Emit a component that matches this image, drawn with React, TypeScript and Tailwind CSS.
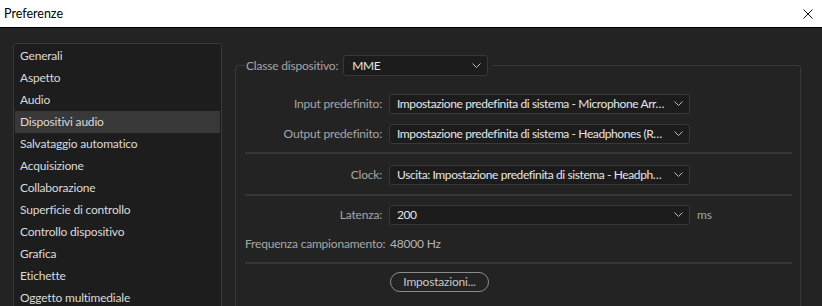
import React from 'react';

const SECTIONS = [
  'Generali',
  'Aspetto',
  'Audio',
  'Dispositivi audio',
  'Salvataggio automatico',
  'Acquisizione',
  'Collaborazione',
  'Superficie di controllo',
  'Controllo dispositivo',
  'Grafica',
  'Etichette',
  'Oggetto multimediale',
];

const Chevron = () => (
  <svg width="9" height="6" viewBox="0 0 9 6" className="shrink-0">
    <polyline points="0.5,0.5 4.5,4.5 8.5,0.5" fill="none" stroke="#bdbdbd" strokeWidth="1" />
  </svg>
);

// the real app cuts long device names itself, so the shown text is passed as is
const Select: React.FC<{ value: string; className?: string }> = ({ value, className = '' }) => (
  <div
    className={`flex h-[20px] items-center justify-between rounded-[3px] border border-[#383838] bg-[#1c1c1c] pl-[7px] pr-[6px] text-[#e6e6e6] ${className}`}
  >
    <span className="whitespace-nowrap tracking-[-0.4px]">{value}</span>
    <Chevron />
  </div>
);

const Row: React.FC<{ label: string; children: React.ReactNode; className?: string }> = ({
  label,
  children,
  className = '',
}) => (
  <div className={`flex items-center ${className}`}>
    <div className="w-[137px] shrink-0 whitespace-nowrap text-right text-[#a6a6a6]">{label}</div>
    <div className="ml-[7px] flex items-center">{children}</div>
  </div>
);

const Divider: React.FC<{ className?: string }> = ({ className = '' }) => (
  <div className={`h-[2px] bg-[#363636] ${className}`} />
);

export default function App() {
  const selected = 'Dispositivi audio';

  return (
    <div
      className="h-[306px] w-[822px] overflow-hidden bg-[#232323] text-[12px] leading-[16px] tracking-[-0.2px]"
      style={{ fontFamily: 'Lato, "Open Sans", sans-serif' }}
    >
      <div className="flex h-[28px] items-center justify-between border-b border-black bg-white pl-[4px] pr-[9px] text-black">
        <span className="text-[12.5px] tracking-normal">Preferenze</span>
        <svg width="10" height="10" viewBox="0 0 10 10">
          <path d="M0.5 0.5 L9.5 9.5 M9.5 0.5 L0.5 9.5" stroke="#111" strokeWidth="1" />
        </svg>
      </div>

      <div className="flex items-start pl-[13px]">
        <div className="mt-[15px] h-[300px] w-[209px] shrink-0 rounded-[3px] border border-[#383838] bg-[#1d1d1d] p-px">
          {SECTIONS.map((s) => (
            <div
              key={s}
              className={`flex h-[22px] items-center pb-px pl-[5px] text-[#dadada] ${
                s === selected ? 'bg-[#383838]' : ''
              }`}
            >
              {s}
            </div>
          ))}
        </div>

        <fieldset className="ml-[13px] mt-[27px] h-[300px] w-[566px] rounded-[3px] border border-[#383838] pb-0 pl-[9px] pr-[8px]">
          <legend className="flex items-center px-[1px]">
            <span className="text-[#a6a6a6]">Classe dispositivo:</span>
            <Select value="MME" className="ml-[5px] h-[21px] w-[145px] pl-[8px]" />
            <span className="w-[3px]" />
          </legend>

          <Row label="Input predefinito:" className="mt-[18px]">
            <Select value="Impostazione predefinita di sistema - Microphone Arr…" className="w-[301px]" />
          </Row>
          <Row label="Output predefinito:" className="mt-[10px]">
            <Select value="Impostazione predefinita di sistema - Headphones (R…" className="w-[301px]" />
          </Row>

          <Divider className="mt-[8px]" />

          <Row label="Clock:" className="mt-[11px]">
            <Select value="Uscita: Impostazione predefinita di sistema - Headph…" className="w-[301px]" />
          </Row>

          <Divider className="mt-[9px]" />

          <Row label="Latenza:" className="mt-[9px]">
            <Select value="200" className="w-[301px]" />
            <span className="ml-[7px] text-[#a6a6a6]">ms</span>
          </Row>

          <div className="mt-[11px] flex h-[16px] items-center">
            <div className="w-[137px] shrink-0 whitespace-nowrap text-right text-[#a6a6a6]">Frequenza campionamento:</div>
            <div className="ml-[8px] text-[#b4b4b4]">48000 Hz</div>
          </div>

          <Divider className="mt-[10px]" />

          <div className="mt-[8px] pl-[145px]">
            <button className="flex h-[20px] w-[99px] items-center justify-center rounded-full border border-[#8c8c8c] text-[#c8c8c8]">
              Impostazioni...
            </button>
          </div>
        </fieldset>
      </div>
    </div>
  );
}
